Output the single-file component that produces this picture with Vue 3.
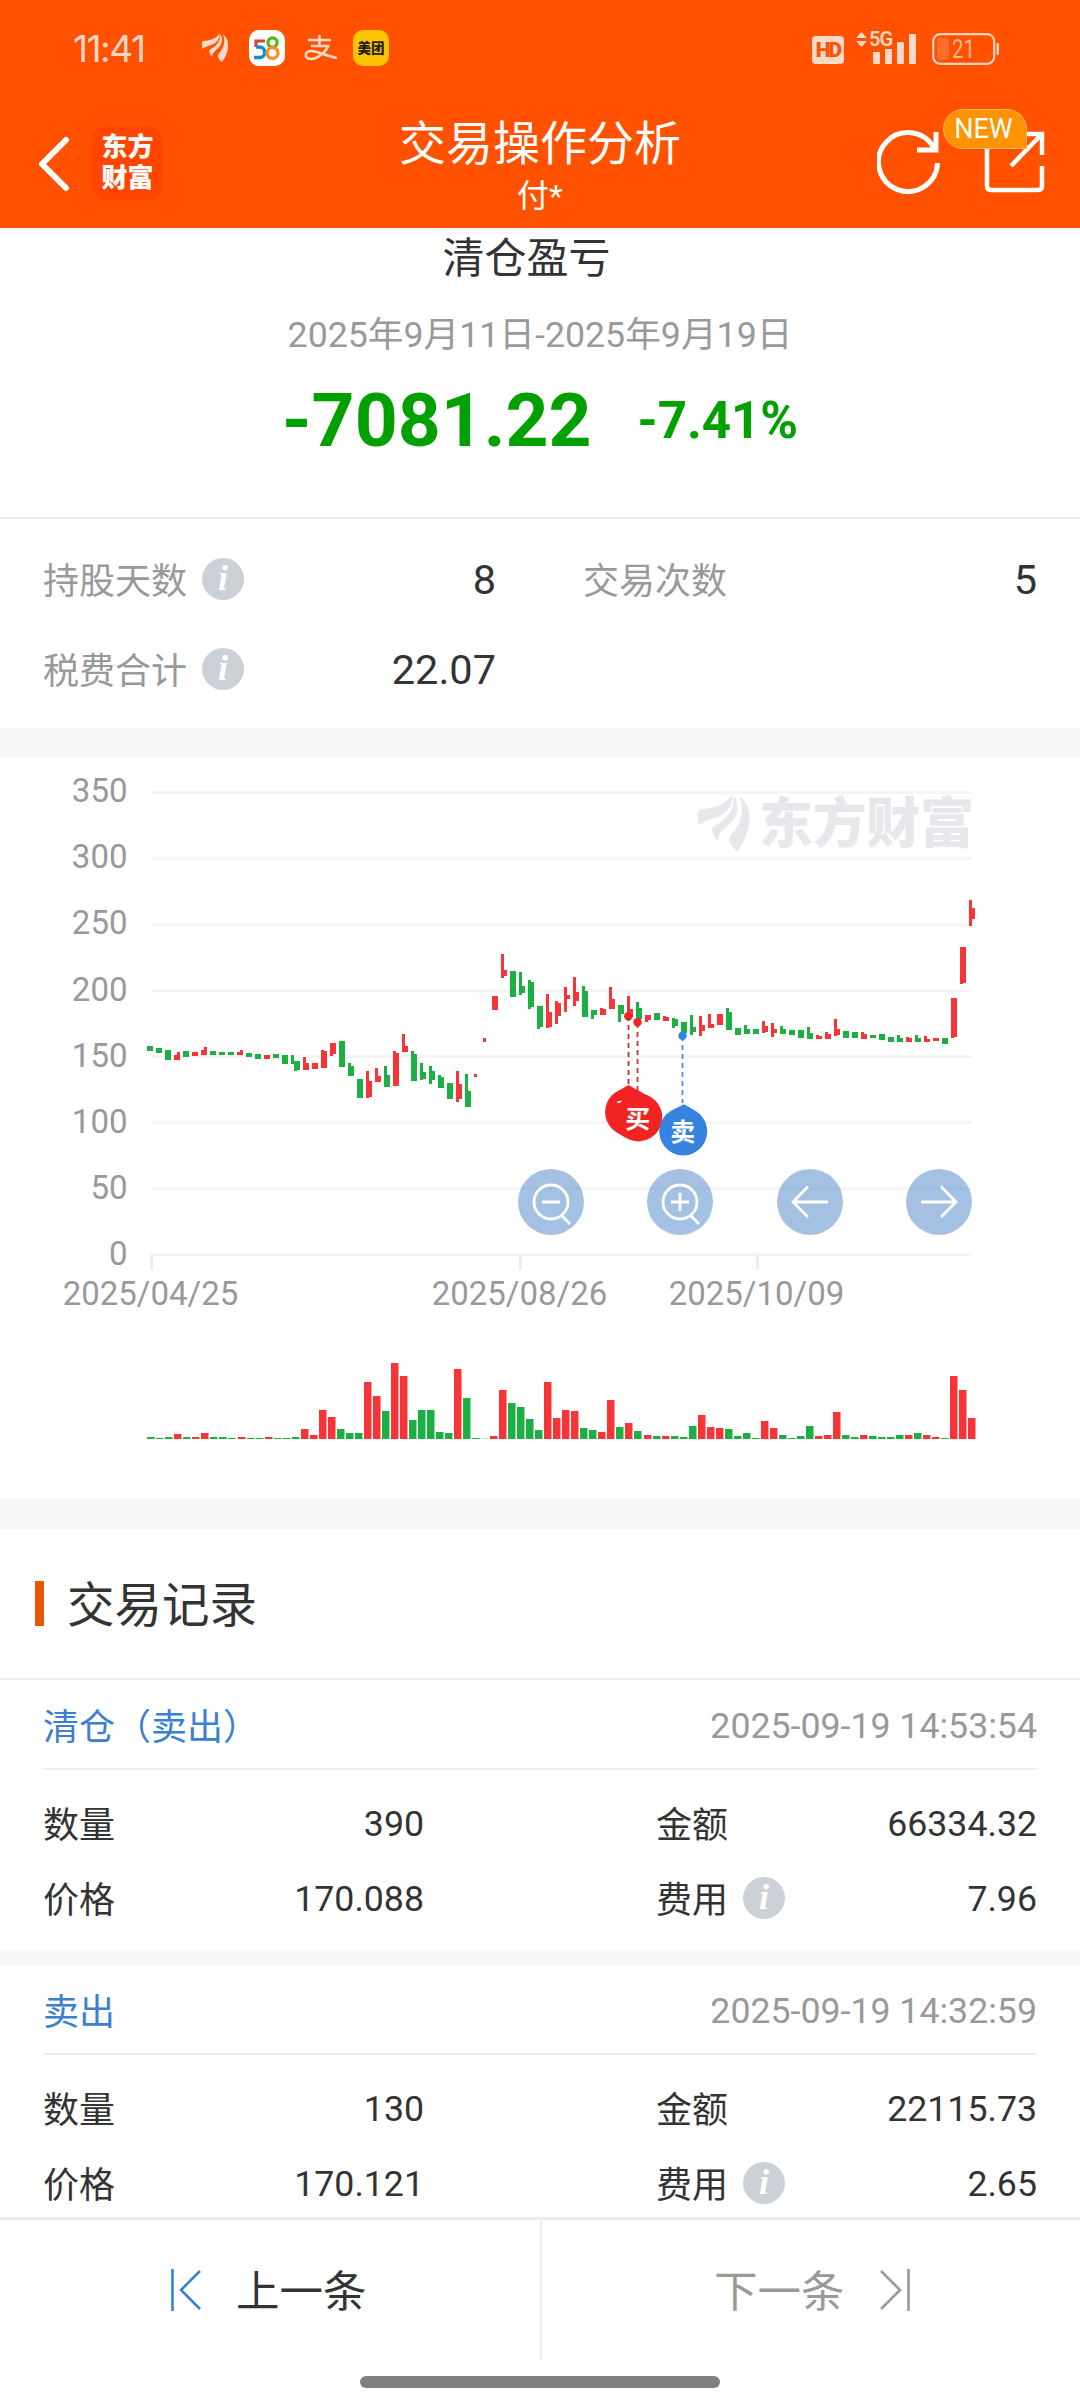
<script setup>
import { ref } from 'vue'

const stats = ref([
  { label: '持股天数', value: '8', tip: true },
  { label: '交易次数', value: '5', tip: false },
  { label: '税费合计', value: '22.07', tip: true }
])

const records = ref([
  { type: '清仓（卖出）', time: '2025-09-19 14:53:54', count: '390', amount: '66334.32', price: '170.088', fee: '7.96' },
  { type: '卖出', time: '2025-09-19 14:32:59', count: '130', amount: '22115.73', price: '170.121', fee: '2.65' }
])

const yAxis = [350, 300, 250, 200, 150, 100, 50, 0]
const xAxis = [
  { x: 151.5, text: '2025/04/25' },
  { x: 520.5, text: '2025/08/26' },
  { x: 757.5, text: '2025/10/09' }
]

// 涨跌, 实体上, 实体下, 影线上, 影线下
const kline = [
  ['g', 146, 151], ['g', 148, 153], ['g', 150, 160], ['r', 155, 160, 152, 160], ['g', 151, 157],
  ['r', 152, 156], ['r', 150, 155, 147, 155], ['g', 151, 155], ['g', 152, 155], ['g', 152, 155],
  ['r', 152, 155, 150, 155], ['g', 153, 157], ['g', 154, 159], ['r', 155, 159], ['g', 154, 158],
  ['g', 155, 164, 155, 164], ['g', 161, 170, 161, 171], ['r', 163, 170, 157, 170], ['r', 163, 169], ['r', 151, 168, 150, 168],
  ['r', 143, 154, 143, 156], ['g', 141, 167], ['g', 166, 176, 163, 176], ['g', 179, 198], ['r', 181, 197, 171, 198],
  ['r', 176, 182, 168, 182], ['g', 175, 187, 166, 187], ['r', 153, 186, 151, 186], ['r', 146, 152, 134, 152], ['g', 154, 181, 151, 181],
  ['g', 172, 179, 163, 180], ['g', 171, 180, 166, 184], ['g', 177, 188, 175, 188], ['g', 183, 199], ['r', 184, 199, 171, 202],
  ['g', 191, 207, 174, 207], ['r', 0, 0, 174, 177], ['r', 0, 0, 138, 142], ['r', 96, 110], ['r', 70, 76, 54, 78],
  ['g', 71, 97], ['g', 86, 93, 72, 95], ['g', 82, 107, 80, 109], ['g', 106, 127, 106, 129], ['r', 112, 127, 94, 128],
  ['r', 103, 116, 101, 124], ['r', 95, 99, 87, 112], ['r', 92, 101, 77, 106], ['g', 91, 117, 86, 117], ['g', 110, 115, 110, 119],
  ['r', 109, 115, 108, 115], ['r', 99, 109, 87, 109], ['g', 105, 114, 105, 122], ['r', 109, 117, 96, 117], ['g', 108, 119, 102, 119],
  ['r', 115, 120, 115, 122], ['g', 113, 120], ['r', 117, 121, 116, 121], ['g', 119, 126, 118, 128], ['g', 122, 133],
  ['g', 127, 132, 115, 135], ['r', 125, 131, 116, 136], ['r', 124, 128, 114, 128], ['r', 114, 125], ['g', 112, 130, 108, 130],
  ['g', 128, 135], ['g', 129, 134, 125, 134], ['g', 129, 134], ['r', 126, 132, 121, 133], ['r', 129, 133, 123, 137],
  ['g', 129, 134, 126, 134], ['g', 130, 135], ['g', 130, 138], ['g', 133, 139, 127, 139], ['r', 136, 139, 135, 139],
  ['r', 134, 139, 132, 139], ['r', 129, 135, 119, 136], ['g', 131, 138], ['g', 132, 138], ['r', 134, 139, 132, 139],
  ['g', 135, 138], ['g', 134, 140], ['g', 137, 142], ['g', 138, 142, 135, 142], ['r', 138, 142, 137, 142],
  ['g', 138, 142, 135, 142], ['r', 139, 142, 136, 142], ['r', 138, 141], ['g', 138, 144], ['r', 98, 137, 98, 138],
  ['r', 47, 83, 47, 84], ['r', 8, 19, 0, 26]
]

const candles = kline.map((k, i) => ({
  color: k[0],
  x: (i < 16 ? 147 : 150) + i * 9,
  wickX: i === 15 ? 291 : 150 + i * 9,
  top: k[1] + 900,
  h: k[2] - k[1],
  wickTop: (k[3] ?? k[1]) + 900,
  wickH: (k[4] ?? k[2]) - (k[3] ?? k[1])
}))

const volume = [
  2, 1, 2, 5, 2, 2, 6, 2, 2, 1, 2, 1, 1, 2, 1, 1, 2, 10, 4, 29, 22, 10, 6, 6, 57, 43, 28, 76, 63, 19, 29, 29, 7, 6, 70,
  41, 1, 0.3, 3, 49, 36, 32, 20, 9, 57, 21, 29, 28, 11, 9, 7, 39, 12, 16, 8, 4, 3, 3, 3, 2, 13, 24, 12, 11, 10, 3, 6, 1,
  18, 11, 4, 1, 3, 13, 3, 4, 27, 4, 2, 4, 3, 2, 2, 4, 4, 6, 4, 2, 1, 63, 49, 21
]
const volColor =
  'gggrggrgggrggrgggrrrrgggrrgrrgggggrg' + 'ggrrggggrrrrggrrgrgrgrgg' + 'rrrggggrrggggrrrggrggggrgrrgrrrr'
const redVolume = [
  3, 5, 6, 10, 13, 17, 18, 19, 20, 24, 25, 27, 28, 34, 38, 39, 44, 45, 46, 47, 50, 51, 53, 55, 57, 61, 62, 63, 68, 69,
  74, 75, 76, 79, 84, 86, 87, 89, 90, 91
]
const bars = volume.map((v, i) => ({
  x: Math.round(147.3 + i * 9.022),
  h: v,
  color: redVolume.includes(i) ? 'r' : 'g'
}))

const tools = [
  { x: 551, icon: 'minus' },
  { x: 680, icon: 'plus' },
  { x: 810, icon: 'left' },
  { x: 939, icon: 'right' }
]
</script>

<template>
  <div class="page">
    <header class="header">
      <div class="status">
        <span class="time">11:41</span>
        <svg class="feather" viewBox="54 75 154 170">
          <path d="M54 165V128Q55 119 64 118Q132 112 157 75Q162 118 112 141Q82 149 54 165Z" />
          <path d="M162 76Q188 124 152 158Q118 184 111 213L98 187Q92 172 108 166Q162 138 162 76Z" />
          <path d="M178 77Q213 106 208 157Q202 208 170 245L151 219Q142 204 156 190Q201 142 178 77Z" />
        </svg>
        <svg class="app app-58" viewBox="0 0 36 36">
          <rect width="36" height="36" rx="10" fill="#fff" />
          <path d="M16 11H7V17" fill="none" stroke="#e33b3b" stroke-width="3.2" />
          <path d="M7 17H10.500A5 5 0 0 1 10.500 27.500H5" fill="none" stroke="#0e8bd6" stroke-width="3.400" />
          <circle cx="23.500" cy="12.500" r="4.600" fill="none" stroke="#4fb81c" stroke-width="3.200" />
          <circle cx="23.500" cy="23" r="5.500" fill="none" stroke="#f0932b" stroke-width="3.400" />
        </svg>
        <svg class="alipay" viewBox="0 0 34 26">
          <path d="M4 5H27M15.500 0V11M7 11H24C22 17 13 24 7 24C0 24 0 16 7 16C14 16 22 21 33 23" />
        </svg>
        <span class="meituan">美团</span>
        <span class="hd">HD</span>
        <div class="signal">
          <span class="net">5G</span>
          <svg viewBox="0 0 62 34">
            <path d="M0 7L5.500 1L11 7ZM0 10H11L5.500 16Z" />
            <rect x="17" y="21" width="7" height="12" rx="1" />
            <rect x="29" y="18" width="7" height="15" rx="1" />
            <rect x="41" y="11" width="7" height="22" rx="1" />
            <rect x="53" y="3" width="7" height="30" rx="1" />
          </svg>
        </div>
        <svg class="battery" viewBox="0 0 68 32">
          <rect x="1.200" y="1.200" width="61" height="29.600" rx="7" fill="none" stroke="#ffd3c0" stroke-width="2.200" />
          <rect x="5" y="5" width="12" height="22" rx="3" fill="#ff6d2a" />
          <rect x="64.500" y="10" width="2.500" height="12" rx="1" fill="#ffd3c0" />
          <text x="20" y="25" textLength="23" lengthAdjust="spacingAndGlyphs" fill="#ffb795">21</text>
        </svg>
      </div>
      <div class="nav">
        <svg class="back" viewBox="0 0 32 56"><path d="M28 4L4 28L28 52" /></svg>
        <div class="brand"><span>东方</span><span>财富</span></div>
        <div class="nav-title">
          <h1>交易操作分析</h1>
          <p>付*</p>
        </div>
        <svg class="refresh" viewBox="0 0 64 66">
          <path d="M60.500 34A29.500 29.500 0 1 1 57 19M59 3V21H40" />
        </svg>
        <div class="share">
          <svg viewBox="0 0 62 62"><path d="M40 3H58V24M58 35V55Q58 59 54 59H7Q3 59 3 55V3M57 4L27 35" /></svg>
          <span class="badge">NEW</span>
        </div>
      </div>
    </header>

    <main class="content">
      <section class="profit">
        <h2>清仓盈亏</h2>
        <p class="range">2025年9月11日-2025年9月19日</p>
        <div class="money">
          <strong>-7081.22</strong>
          <em>-7.41%</em>
        </div>
      </section>

      <section class="stats">
        <div v-for="item in stats" :key="item.label" class="stat">
          <span class="label">{{ item.label }}</span>
          <span v-if="item.tip" class="info">i</span>
          <span class="value">{{ item.value }}</span>
        </div>
      </section>

      <div class="gap"></div>

      <svg class="chart" viewBox="0 757 1080 742">
        <!-- 坐标轴 -->
        <g v-for="(n, i) in yAxis" :key="n">
          <rect class="grid" x="151" :y="791 + i * 66" width="821" height="3" />
          <text class="axis" x="127.500" :y="802 + i * 66.200" text-anchor="end">{{ n }}</text>
        </g>
        <g v-for="d in xAxis" :key="d.text">
          <rect class="tick" :x="d.x - 1.5" y="1255" width="3" height="15" />
          <text class="axis" :x="d.x - 1" y="1305" text-anchor="middle">{{ d.text }}</text>
        </g>

        <!-- 水印 -->
        <g class="watermark">
          <g transform="translate(680 770) scale(0.3333)">
            <path d="M54 165V128Q55 119 64 118Q132 112 157 75Q162 118 112 141Q82 149 54 165Z" />
            <path d="M162 76Q188 124 152 158Q118 184 111 213L98 187Q92 172 108 166Q162 138 162 76Z" />
            <path d="M178 77Q213 106 208 157Q202 208 170 245L151 219Q142 204 156 190Q201 142 178 77Z" />
          </g>
          <text x="759" y="843" textLength="215">东方财富</text>
        </g>

        <!-- K线 -->
        <g v-for="(c, i) in candles" :key="i" :class="c.color">
          <rect :x="c.x" :y="c.top" width="6" :height="c.h" />
          <rect :x="c.wickX" :y="c.wickTop" width="3" :height="c.wickH" />
        </g>

        <!-- 买卖点 -->
        <g class="buy">
          <path class="dash" d="M628.500 1016V1086M637.500 1023V1092" />
          <circle cx="628.300" cy="1016.300" r="4.200" />
          <circle cx="637.500" cy="1022.300" r="4.200" />
          <circle cx="628.700" cy="1112" r="23.600" />
          <circle cx="638.300" cy="1117.400" r="24" />
          <path d="M628.500 1085L614 1093.500L617 1132.500L626 1138L653 1099Z" />
          <path class="spot" d="M617 1101.500L623 1100.500L618.500 1103.500Z" />
          <text x="637.700" y="1128">买</text>
        </g>
        <g class="sell">
          <path class="dash" d="M682.500 1036V1103" />
          <circle cx="682.500" cy="1035.700" r="4.200" />
          <path d="M684 1104.300L695 1110.500A24 24 0 1 1 671.500 1110.500Z" />
          <text x="682.700" y="1141">卖</text>
        </g>

        <g v-for="t in tools" :key="t.icon" class="tool" :transform="`translate(${t.x} 1202)`">
          <circle class="tool-bg" r="33" />
          <template v-if="t.icon === 'minus' || t.icon === 'plus'">
            <circle r="17" />
            <path d="M-9 0H9M11 14L19 22" />
            <path v-if="t.icon === 'plus'" d="M0 -9V9" />
          </template>
          <path v-else-if="t.icon === 'left'" d="M18 0H-17M-2 -15.500L-17 0L-2 15" />
          <path v-else d="M-18 0H17M2 -15.500L17 0L2 15" />
        </g>

        <!-- 成交量 -->
        <rect v-for="(b, i) in bars" :key="'v' + i" :class="b.color" :x="b.x" :y="1439 - b.h" width="7.500" :height="b.h" />
      </svg>

      <div class="gap"></div>

      <h3 class="section-title"><span>交易记录</span></h3>
      <section v-for="item in records" :key="item.time" class="record">
        <div class="record-head">
          <span class="type">{{ item.type }}</span>
          <span class="date">{{ item.time }}</span>
        </div>
        <div class="record-body">
          <div class="cell"><span>数量</span><b>{{ item.count }}</b></div>
          <div class="cell"><span>金额</span><b>{{ item.amount }}</b></div>
          <div class="cell"><span>价格</span><b>{{ item.price }}</b></div>
          <div class="cell"><span>费用</span><i class="info">i</i><b>{{ item.fee }}</b></div>
        </div>
      </section>
    </main>

    <footer class="footer">
      <div class="pager">
        <div class="page-btn prev">
          <svg viewBox="0 0 32 44"><path d="M2.500 1V43M30 3L11 22L30 41" /></svg>
          <span>上一条</span>
        </div>
        <div class="page-btn next">
          <span>下一条</span>
          <svg viewBox="0 0 32 44"><path d="M29.500 1V43M2 3L21 22L2 41" /></svg>
        </div>
      </div>
      <div class="handle"></div>
    </footer>
  </div>
</template>

<style>
body {
  margin: 0;
  background: #fff;
}
</style>

<style scoped>
.page {
  width: 1080px;
  height: 2408px;
  display: flex;
  flex-direction: column;
  overflow: hidden;
  background: #fff;
  color: #333;
  font-family: Roboto, "Noto Sans CJK SC", sans-serif;
  font-size: 36px;
}
h1, h2, h3, p {
  margin: 0;
  font-weight: 400;
}
svg {
  display: block;
  flex: none;
}

/* 顶部 */
.header {
  height: 228px;
  flex: none;
  background: #ff5100;
  color: #fff;
}
.status {
  height: 96px;
  display: flex;
  align-items: center;
  padding: 0 80px 0 73px;
  box-sizing: border-box;
  color: #ffd6c5;
}
.time {
  width: 129px;
  font-family: Inter, sans-serif;
  font-size: 37px;
  letter-spacing: -1.5px;
}
.feather {
  width: 26px;
  height: 30px;
  fill: #ffd9c8;
}
.app {
  width: 36px;
  height: 36px;
  margin-left: 21px;
}
.alipay {
  width: 34px;
  height: 26px;
  margin-left: 19px;
  fill: none;
  stroke: #ffd9c8;
  stroke-width: 2.600;
}
.meituan {
  width: 36px;
  height: 36px;
  margin: 0 auto 0 15px;
  border-radius: 10px;
  background: #ffc300;
  color: #222;
  font-size: 13.500px;
  font-weight: 900;
  line-height: 36px;
  text-align: center;
}
.hd {
  width: 32px;
  height: 28px;
  margin: 3px 12px 0 0;
  border-radius: 4px;
  background: #ffd9c8;
  color: #ff5100;
  font-size: 21px;
  font-weight: 900;
  line-height: 29px;
  text-align: center;
  letter-spacing: -2px;
}
.signal {
  position: relative;
  width: 62px;
  height: 34px;
  fill: #ffd9c8;
}
.net {
  position: absolute;
  left: 13px;
  top: -5px;
  font-size: 20px;
  font-weight: 600;
  line-height: 26px;
  letter-spacing: -1px;
}
.battery {
  width: 68px;
  height: 32px;
  margin: 2px 0 0 14px;
}
.battery text {
  font-size: 26px;
}
.nav {
  position: relative;
  height: 132px;
  display: flex;
  align-items: center;
  padding: 0 34px 0 38px;
}
.back {
  width: 32px;
  height: 56px;
  margin-top: 4px;
  fill: none;
  stroke: #fff;
  stroke-width: 6;
  stroke-linecap: round;
  stroke-linejoin: round;
}
.brand {
  width: 71px;
  height: 73px;
  margin: 3px 0 0 22px;
  padding-top: 5px;
  box-sizing: border-box;
  border-radius: 14px;
  background: #ff4500;
  display: flex;
  flex-direction: column;
  align-items: center;
  font-size: 26px;
  font-weight: 900;
  line-height: 31px;
}
.nav-title {
  position: absolute;
  left: 0;
  right: 0;
  top: 15px;
  text-align: center;
}
.nav-title h1 {
  font-size: 47px;
  line-height: 66px;
}
.nav-title p {
  font-size: 32px;
  line-height: 38px;
}
.refresh {
  width: 64px;
  height: 66px;
  margin-left: auto;
  fill: none;
  stroke: #fff;
  stroke-width: 5;
}
.share {
  position: relative;
  margin-left: 43px;
}
.share svg {
  width: 62px;
  height: 62px;
  fill: none;
  stroke: #fff;
  stroke-width: 4.500;
}
.badge {
  position: absolute;
  left: -41px;
  top: -22px;
  width: 84px;
  height: 40px;
  padding-right: 3px;
  box-sizing: border-box;
  border: 1px solid #ffb45a;
  border-radius: 20px 20px 0 20px;
  background: #ff9300;
  font-size: 27px;
  line-height: 39px;
  text-align: center;
}

/* 盈亏 */
.content {
  flex: 1;
  min-height: 0;
  overflow: hidden;
}
.profit {
  height: 289px;
  border-bottom: 2px solid #eee;
  text-align: center;
}
.profit h2 {
  padding: 1px 27px 0 0;
  font-size: 42px;
  line-height: 60px;
}
.range {
  margin-top: 20px;
  color: #999;
  font-size: 35.700px;
  line-height: 52px;
}
.money {
  display: flex;
  justify-content: center;
  align-items: center;
  gap: 46px;
  margin-top: 14px;
  height: 90px;
  color: #00a000;
}
.money strong {
  font-size: 75px;
}
.money em {
  font-style: normal;
  font-weight: 700;
  font-size: 51px;
}
.stats {
  height: 209px;
  display: grid;
  grid-template-columns: 453px 454px;
  column-gap: 87px;
  grid-auto-rows: 90px;
  padding: 15px 43px 0;
  box-sizing: border-box;
}
.stat {
  display: flex;
  align-items: center;
}
.label {
  padding-bottom: 2px;
  color: #999;
}
.value {
  margin-left: auto;
  font-size: 41.500px;
}
.info {
  width: 42px;
  height: 42px;
  margin-left: 15px;
  border-radius: 50%;
  background: #ccd0d7;
  color: #fff;
  font: italic 700 36px/40px "Liberation Serif", serif;
  text-align: center;
}
.gap {
  height: 30px;
  background: #f7f7f7;
}

/* 图表 */
.chart {
  width: 1080px;
  height: 742px;
  margin-top: -1px;
}
.grid {
  fill: #f5f5f5;
}
.tick {
  fill: #eee;
}
.axis {
  fill: #999;
  font-size: 33px;
}
.watermark {
  fill: #e7e7ec;
  font-size: 54px;
  font-weight: 900;
}
.r {
  fill: #f73539;
}
.g {
  fill: #1caf43;
}
.buy {
  fill: #f22323;
}
.sell {
  fill: #3783e0;
}
.buy text,
.sell text {
  fill: #fff;
  font-size: 25px;
  font-weight: 700;
  text-anchor: middle;
}
.buy .spot {
  fill: #fff;
}
.buy .dash,
.sell .dash {
  fill: none;
  stroke: #c93030;
  stroke-width: 1.800;
  stroke-dasharray: 5 4;
}
.sell .dash {
  stroke: #4a90d9;
}
.tool {
  fill: none;
  stroke: #fff;
  stroke-width: 2.800;
}
.tool-bg {
  fill: rgba(73, 131, 199, 0.5);
  stroke: none;
}

/* 交易记录 */
.section-title {
  display: flex;
  align-items: center;
  height: 149px;
  padding-left: 35px;
  border-bottom: 2px solid #eee;
  font-size: 47.500px;
}
.section-title span {
  padding-bottom: 4px;
}
.section-title::before {
  content: '';
  width: 9px;
  height: 45px;
  margin-right: 23px;
  background: #e95504;
}
.record {
  height: 270px;
  padding: 0 43px;
  border-bottom: 15px solid #f7f7f7;
}
.record-head {
  height: 88px;
  display: flex;
  align-items: center;
  justify-content: space-between;
  border-bottom: 2px solid #eee;
}
.type {
  color: #3a7fd0;
}
.date {
  padding-top: 4px;
  color: #999;
  font-size: 35.700px;
}
.record-body {
  display: grid;
  grid-template-columns: 381px 381px;
  column-gap: 232px;
  grid-auto-rows: 75px;
  padding-top: 15px;
}
.cell {
  display: flex;
  align-items: center;
}
.cell span {
  padding-bottom: 2px;
}
.cell b {
  margin-left: auto;
  padding-top: 2px;
  font-weight: 400;
  font-size: 35.700px;
}

/* 底部翻页 */
.footer {
  height: 191px;
  flex: none;
  box-sizing: border-box;
  border-top: 3px solid #ececec;
}
.pager {
  display: flex;
  height: 140px;
}
.page-btn {
  flex: 1;
  display: flex;
  align-items: center;
  box-sizing: border-box;
  font-size: 43.500px;
}
.page-btn span {
  padding-bottom: 4px;
}
.page-btn svg {
  width: 32px;
  height: 44px;
  fill: none;
  stroke: #999;
  stroke-width: 2.600;
}
.prev {
  flex: 0 0 542px;
  padding-left: 170px;
  gap: 34px;
  border-right: 2px solid #eee;
}
.page-btn.prev svg {
  stroke: #3a7fd0;
}
.next {
  padding-left: 172px;
  gap: 34px;
  color: #999;
}
.handle {
  width: 360px;
  height: 12px;
  margin: 16px auto 0;
  border-radius: 6px;
  background: #808080;
}
</style>
